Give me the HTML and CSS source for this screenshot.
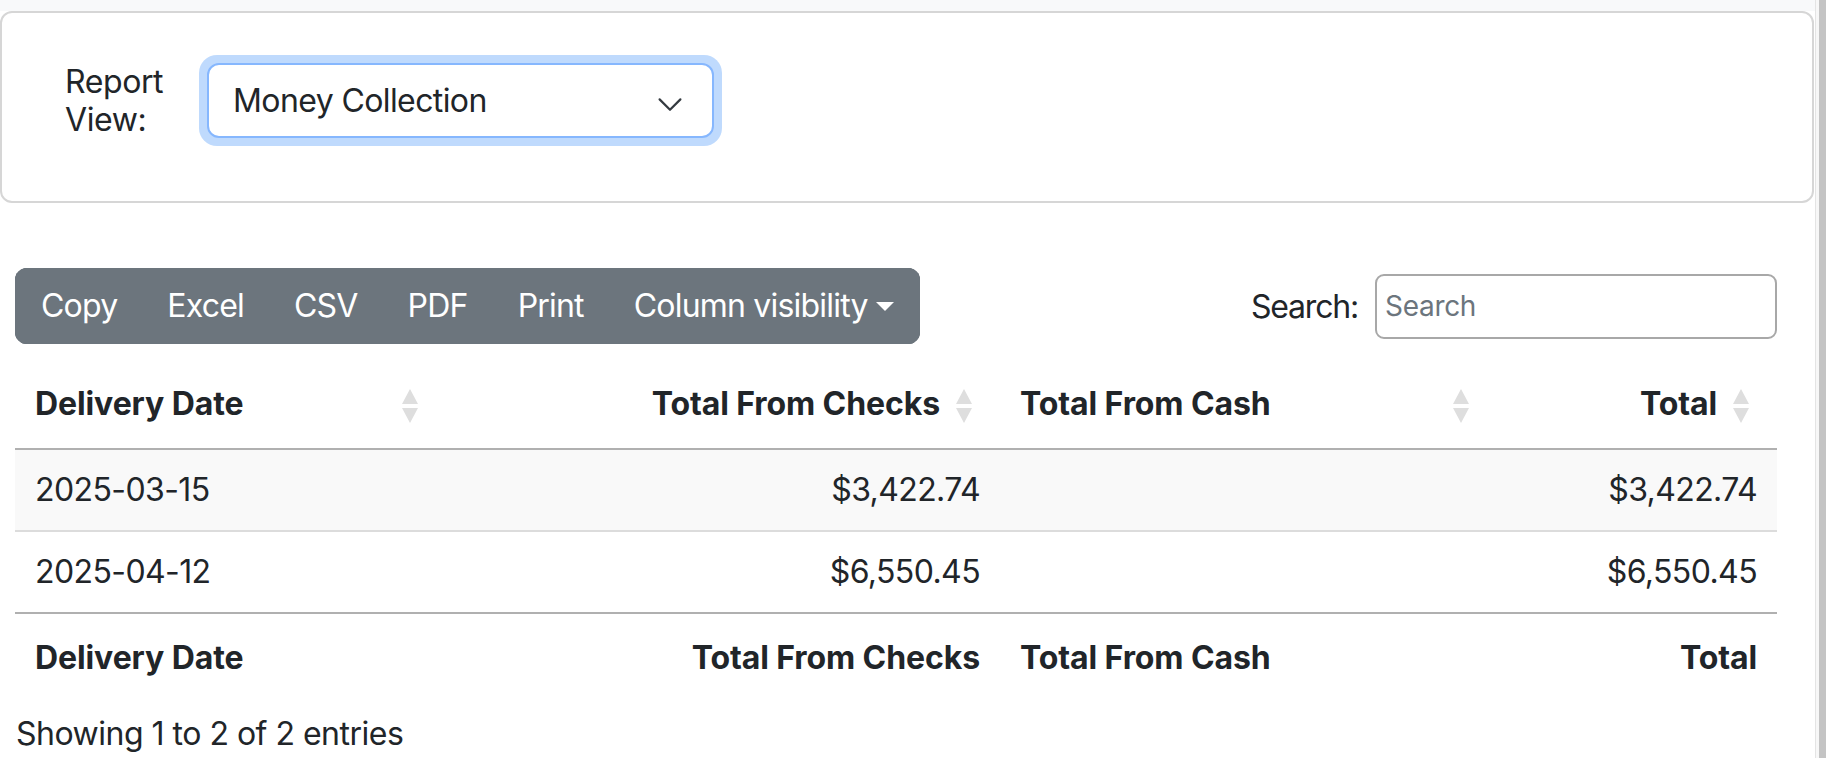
FILE: index.html
```html
<!DOCTYPE html>
<html lang="en">
<head>
<meta charset="utf-8">
<title>Money Collection Report</title>
<link rel="stylesheet" href="styles.css">
</head>
<body>
<div class="page">
  <div class="topband"></div>
  <div class="card">
    <div class="card-body">
      <label class="rv-label" for="rv">Report View:</label>
      <div class="select-ring">
        <div class="select" id="rv">
          <span>Money Collection</span>
          <svg class="chev" width="32" height="24" viewBox="0 0 16 12"><path d="M2.8 5.2l5.2 5.2 5.2-5.2" fill="none" stroke="#343a40" stroke-width="1.1" stroke-linecap="round" stroke-linejoin="round"/></svg>
        </div>
      </div>
    </div>
  </div>

  <div class="dt-wrapper">
    <div class="toolbar">
      <div class="btn-group">
        <button class="btn">Copy</button>
        <button class="btn">Excel</button>
        <button class="btn">CSV</button>
        <button class="btn">PDF</button>
        <button class="btn">Print</button>
        <button class="btn dropdown-toggle">Column visibility</button>
      </div>
      <label class="filter">Search:<input type="search" placeholder="Search"></label>
    </div>

    <table class="dt">
      <colgroup>
        <col class="c1"><col class="c2"><col class="c3"><col class="c4">
      </colgroup>
      <thead>
        <tr>
          <th class="sorting">Delivery Date<svg class="sort" width="16" height="34" viewBox="0 0 16 34"><path d="M8 0L16 15H0Z M0 19H16L8 34Z" fill="#dedede"/></svg></th>
          <th class="sorting r">Total From Checks<svg class="sort" width="16" height="34" viewBox="0 0 16 34"><path d="M8 0L16 15H0Z M0 19H16L8 34Z" fill="#dedede"/></svg></th>
          <th class="sorting">Total From Cash<svg class="sort" width="16" height="34" viewBox="0 0 16 34"><path d="M8 0L16 15H0Z M0 19H16L8 34Z" fill="#dedede"/></svg></th>
          <th class="sorting r">Total<svg class="sort" width="16" height="34" viewBox="0 0 16 34"><path d="M8 0L16 15H0Z M0 19H16L8 34Z" fill="#dedede"/></svg></th>
        </tr>
      </thead>
      <tbody>
        <tr class="odd">
          <td>2025-03-15</td><td class="r">$3,422.74</td><td></td><td class="r">$3,422.74</td>
        </tr>
        <tr>
          <td>2025-04-12</td><td class="r">$6,550.45</td><td></td><td class="r">$6,550.45</td>
        </tr>
      </tbody>
      <tfoot>
        <tr>
          <th>Delivery Date</th><th class="r">Total From Checks</th><th>Total From Cash</th><th class="r">Total</th>
        </tr>
      </tfoot>
    </table>
    <div class="info">Showing 1 to 2 of 2 entries</div>
  </div>
  <div class="scrollbar"><div class="thumb"></div></div>
</div>
</body>
</html>
```

FILE: styles.css
```css
* { box-sizing: border-box; }
html, body { margin: 0; padding: 0; background: #fff; }
body {
  font-family: Inter, "Noto Sans", "Liberation Sans", sans-serif;
  font-size: 32px;
  color: #212529;
  overflow: hidden;
}
.page { position: relative; width: 1826px; height: 758px; overflow: hidden; }

.topband { height: 11px; width: 1815px; background: #f8f9fa; }

.card {
  width: 1814px;
  height: 192px;
  border: 2px solid #d6d6d6;
  border-radius: 12px;
  background: #fff;
}
.card-body {
  display: flex;
  align-items: center;
  padding: 42px 0 0 63px;
}
.rv-label {
  width: 142px;
  font-size: 32px;
  line-height: 38px;
  letter-spacing: -0.4px;
}
.select-ring {
  padding: 8px;
  margin-left: -8px;
  border-radius: 18px;
  background: #bfdafd;
}
.select {
  width: 507px;
  height: 75px;
  border: 2px solid #86b7fe;
  border-radius: 12px;
  background: #fff;
  display: flex;
  align-items: center;
  justify-content: space-between;
  padding: 0 26px 0 24px;
  font-size: 32px;
  letter-spacing: -0.6px;
}
.chev { display: block; }

.dt-wrapper {
  margin: 65px 49px 0 15px;
  width: 1762px;
}
.toolbar {
  display: flex;
  align-items: center;
  justify-content: space-between;
  height: 76px;
}
.btn-group { display: flex; border-radius: 12px; overflow: hidden; background: #6c757d; }
.btn {
  font-family: inherit;
  font-size: 32px;
  line-height: 48px;
  letter-spacing: -0.8px;
  color: #fff;
  background: #6c757d;
  border: 2px solid #6c757d;
  padding: 12px 24px;
  margin: 0 0 0 -2px;
}
.btn:first-child { margin-left: 0; }
.dropdown-toggle::after {
  content: "";
  display: inline-block;
  margin-left: 8px;
  vertical-align: 6px;
  border-top: 9px solid #fff;
  border-left: 9px solid transparent;
  border-right: 9px solid transparent;
}
.filter {
  display: flex;
  align-items: center;
  font-size: 32px;
  letter-spacing: -1.2px;
}
.filter input {
  margin-left: 17px;
  width: 402px;
  height: 65px;
  border: 2px solid #a8a8a8;
  border-radius: 9px;
  padding: 0 8px;
  font-family: inherit;
  font-size: 28px;
  letter-spacing: -0.3px;
  color: #212529;
  outline: none;
}
.filter input::placeholder { color: #6c757d; }

.dt {
  margin-top: 16px;
  width: 1762px;
  table-layout: fixed;
  border-collapse: separate;
  border-spacing: 0;
  font-size: 32px;
  letter-spacing: -0.6px;
}
.c1 { width: 431px; }
.c2 { width: 554px; }
.c3 { width: 497px; }
.c4 { width: 280px; }
.dt th, .dt td { line-height: 48px; text-align: left; white-space: nowrap; }
.dt .r { text-align: right; }
.dt th { letter-spacing: -0.1px; }
.dt thead th {
  font-weight: 700;
  padding: 20px 60px 20px 20px;
  border-bottom: 2px solid #b0b0b0;
  position: relative;
}
.sort { position: absolute; right: 28px; top: 29px; }
.dt td { padding: 16px 20px; }
.dt tbody tr.odd td { background: #f9f9f9; }
.dt tbody tr + tr td { border-top: 2px solid #dcdcdc; }
.dt tfoot th {
  font-weight: 700;
  padding: 20px 20px;
  border-top: 2px solid #b0b0b0;
}
.info {
  margin-top: 8px;
  line-height: 48px;
  font-size: 32px;
  letter-spacing: -0.5px;
  padding-left: 1px;
}

.scrollbar {
  position: absolute;
  top: 0; right: 0;
  width: 11px; height: 758px;
  border-left: 1px solid #e4e4e4;
  background: #f7f7f7;
}
.thumb {
  position: absolute;
  right: 0; top: 0;
  width: 7px; height: 758px;
  background: #c4c4c4;
}
```
